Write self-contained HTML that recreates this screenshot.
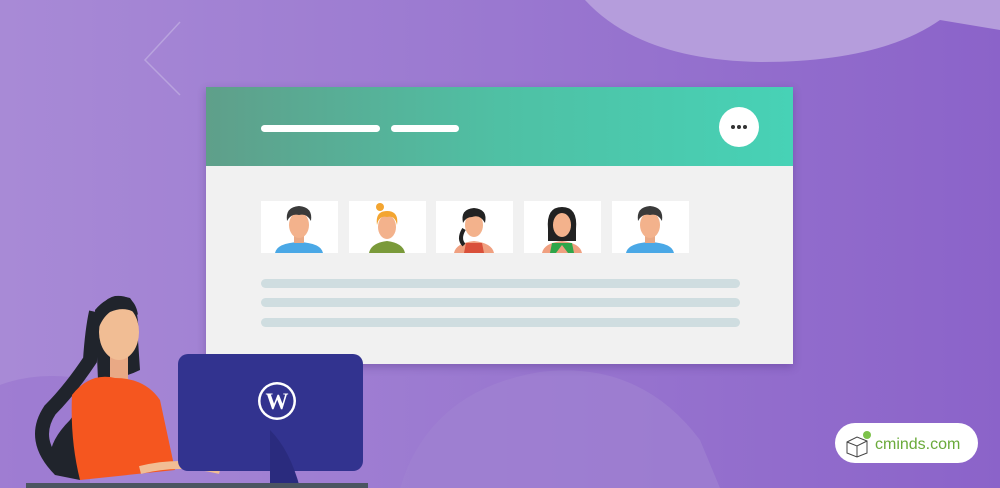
<!DOCTYPE html>
<html><head><style>
body{margin:0;width:1000px;height:488px;overflow:hidden;font-family:"Liberation Sans",sans-serif}
#bg{position:absolute;left:0;top:0;width:1000px;height:488px;background:linear-gradient(90deg,#a88ad6 0%,#9a78d0 50%,#8b63c9 100%);overflow:hidden}
.card{position:absolute;left:206px;top:87px;width:587px;height:277px;background:#f1f1f1;box-shadow:0 3px 8px rgba(60,30,110,.3)}
.hd{position:absolute;left:0;top:0;width:587px;height:79px;background:linear-gradient(90deg,#5f9f8a 0%,#4fc0a4 50%,#47d2b6 100%)}
.bar{position:absolute;height:7px;background:#fff;border-radius:4px;top:38px}
.dots{position:absolute;left:513px;top:20px;width:40px;height:40px;border-radius:50%;background:#fff}
.dots i{position:absolute;top:18px;width:4px;height:4px;border-radius:50%;background:#333}
.av{position:absolute;top:114px;width:77px;height:52px;background:#fff;overflow:hidden}
.ln{position:absolute;left:55px;width:479px;height:9px;border-radius:5px;background:#cfdde0}
.pill{position:absolute;left:835px;top:423px;width:143px;height:40px;border-radius:20px;background:#fff}
</style></head><body>
<div id="bg">
<svg width="1000" height="488" style="position:absolute;left:0;top:0">
<path d="M585 0 Q640 60 760 62 Q880 62 940 20 L1000 30 L1000 0Z" fill="#b59ddc"/>
<path d="M400 488 Q430 390 540 372 Q640 360 700 440 L720 488Z" fill="#9f82d2" opacity=".7"/>
<path d="M0 385 Q40 370 90 380 L90 488 L0 488Z" fill="#9570cd" opacity=".5"/>
<path d="M180 22 L145 60 L180 95" stroke="#b9a3de" stroke-width="1.5" fill="none"/>
</svg>
<div class="card">
<div class="hd">
<div class="bar" style="left:55px;width:119px"></div>
<div class="bar" style="left:185px;width:68px"></div>
<div class="dots"><i style="left:12px"></i><i style="left:18px"></i><i style="left:24px"></i></div>
</div>
<div class="av" style="left:55px"><svg width="77" height="52"><path d="M14 52 Q16 42 38 41 Q60 42 62 52Z" fill="#4aa8e6"/><rect x="33" y="30" width="10" height="12" fill="#e9a985"/><ellipse cx="38" cy="24" rx="10" ry="13" fill="#f3b28c"/><path d="M26 20 Q24 6 38 5 Q52 6 50 20 Q46 12 38 14 Q30 12 26 20Z" fill="#3a3a3a"/></svg></div>
<div class="av" style="left:143px"><svg width="77" height="52"><path d="M20 52 Q22 42 38 40 Q54 42 56 52Z" fill="#7a9a3a"/><ellipse cx="38" cy="26" rx="9" ry="12" fill="#f3b28c"/><path d="M28 24 Q26 10 38 10 Q50 10 48 24 Q46 14 38 16 Q30 14 28 24Z" fill="#f3a531"/><circle cx="31" cy="6" r="4" fill="#f3a531"/></svg></div>
<div class="av" style="left:230px"><svg width="77" height="52"><path d="M18 52 Q20 42 38 40 Q56 42 58 52Z" fill="#f0a080"/><path d="M28 52 L30 42 L46 42 L48 52Z" fill="#d9503a"/><ellipse cx="38" cy="24" rx="9" ry="12" fill="#f3b28c"/><path d="M27 22 Q24 8 38 7 Q52 8 49 22 Q44 13 36 16 Q30 16 27 22Z" fill="#222"/><path d="M28 28 Q22 38 28 44" stroke="#222" stroke-width="4" fill="none"/></svg></div>
<div class="av" style="left:318px"><svg width="77" height="52"><path d="M24 28 Q22 6 38 6 Q54 6 52 28 L52 40 L24 40Z" fill="#222"/><path d="M18 52 Q20 42 38 40 Q56 42 58 52Z" fill="#f0a080"/><path d="M26 52 L28 42 L48 42 L50 52 L44 52 L38 44 L32 52Z" fill="#2fa64a"/><ellipse cx="38" cy="24" rx="9" ry="12" fill="#f3b28c"/><path d="M28 20 Q32 10 38 12 Q46 12 48 20 Q46 8 38 8 Q28 8 28 20Z" fill="#222"/></svg></div>
<div class="av" style="left:406px"><svg width="77" height="52"><path d="M14 52 Q16 42 38 41 Q60 42 62 52Z" fill="#4aa8e6"/><rect x="33" y="30" width="10" height="12" fill="#e9a985"/><ellipse cx="38" cy="24" rx="10" ry="13" fill="#f3b28c"/><path d="M26 20 Q24 6 38 5 Q52 6 50 20 Q46 12 38 14 Q30 12 26 20Z" fill="#3a3a3a"/></svg></div>
<div class="ln" style="top:192px"></div>
<div class="ln" style="top:211px"></div>
<div class="ln" style="top:231px"></div>
</div>
<svg width="400" height="488" style="position:absolute;left:0;top:0">
<path d="M95 310 Q110 292 130 298 Q140 310 138 340 L140 370 Q120 380 95 380 Q85 400 70 420 Q40 450 55 475 L80 480 Q95 420 98 380Z" fill="#20242c"/>
<path d="M60 470 Q30 440 50 410 Q70 390 90 360 Q92 330 96 312" stroke="#20242c" stroke-width="14" fill="none"/>
<rect x="110" y="355" width="18" height="25" fill="#e9a985"/>
<ellipse cx="119" cy="332" rx="20" ry="28" fill="#f1bd94"/>
<path d="M98 330 Q96 300 115 296 Q135 294 138 315 Q126 305 110 312 Q102 318 98 330Z" fill="#20242c"/>
<path d="M72 395 Q90 372 115 378 Q145 378 160 400 L175 470 L80 480 Q70 440 72 395Z" fill="#f5561f"/>
<path d="M140 470 Q180 460 220 470" stroke="#f1bd94" stroke-width="8" fill="none"/>
<rect x="178" y="354" width="185" height="117" rx="10" fill="#32338f"/>
<path d="M270 430 Q290 450 300 488 L270 488Z" fill="#2a2b7e"/>
<circle cx="277" cy="401" r="19" fill="#fff"/>
<circle cx="277" cy="401" r="16.5" fill="#32338f"/>
<text x="277" y="409" text-anchor="middle" font-family="Liberation Serif" font-weight="bold" font-size="23" fill="#fff">W</text>
<rect x="26" y="483" width="342" height="6" fill="#4b5561"/>
</svg>
<div class="pill">
<svg width="143" height="40"><path d="M12 19 L22 14 L32 18 L32 30 L22 34 L12 30Z M12 19 L22 23 L32 18 M22 23 L22 34" stroke="#444" stroke-width="1" fill="none"/><circle cx="32" cy="12" r="4" fill="#7cc24a"/><text x="40" y="26" font-size="16" fill="#6aaa3a">cminds.com</text></svg>
</div>
</div>
</body></html>
